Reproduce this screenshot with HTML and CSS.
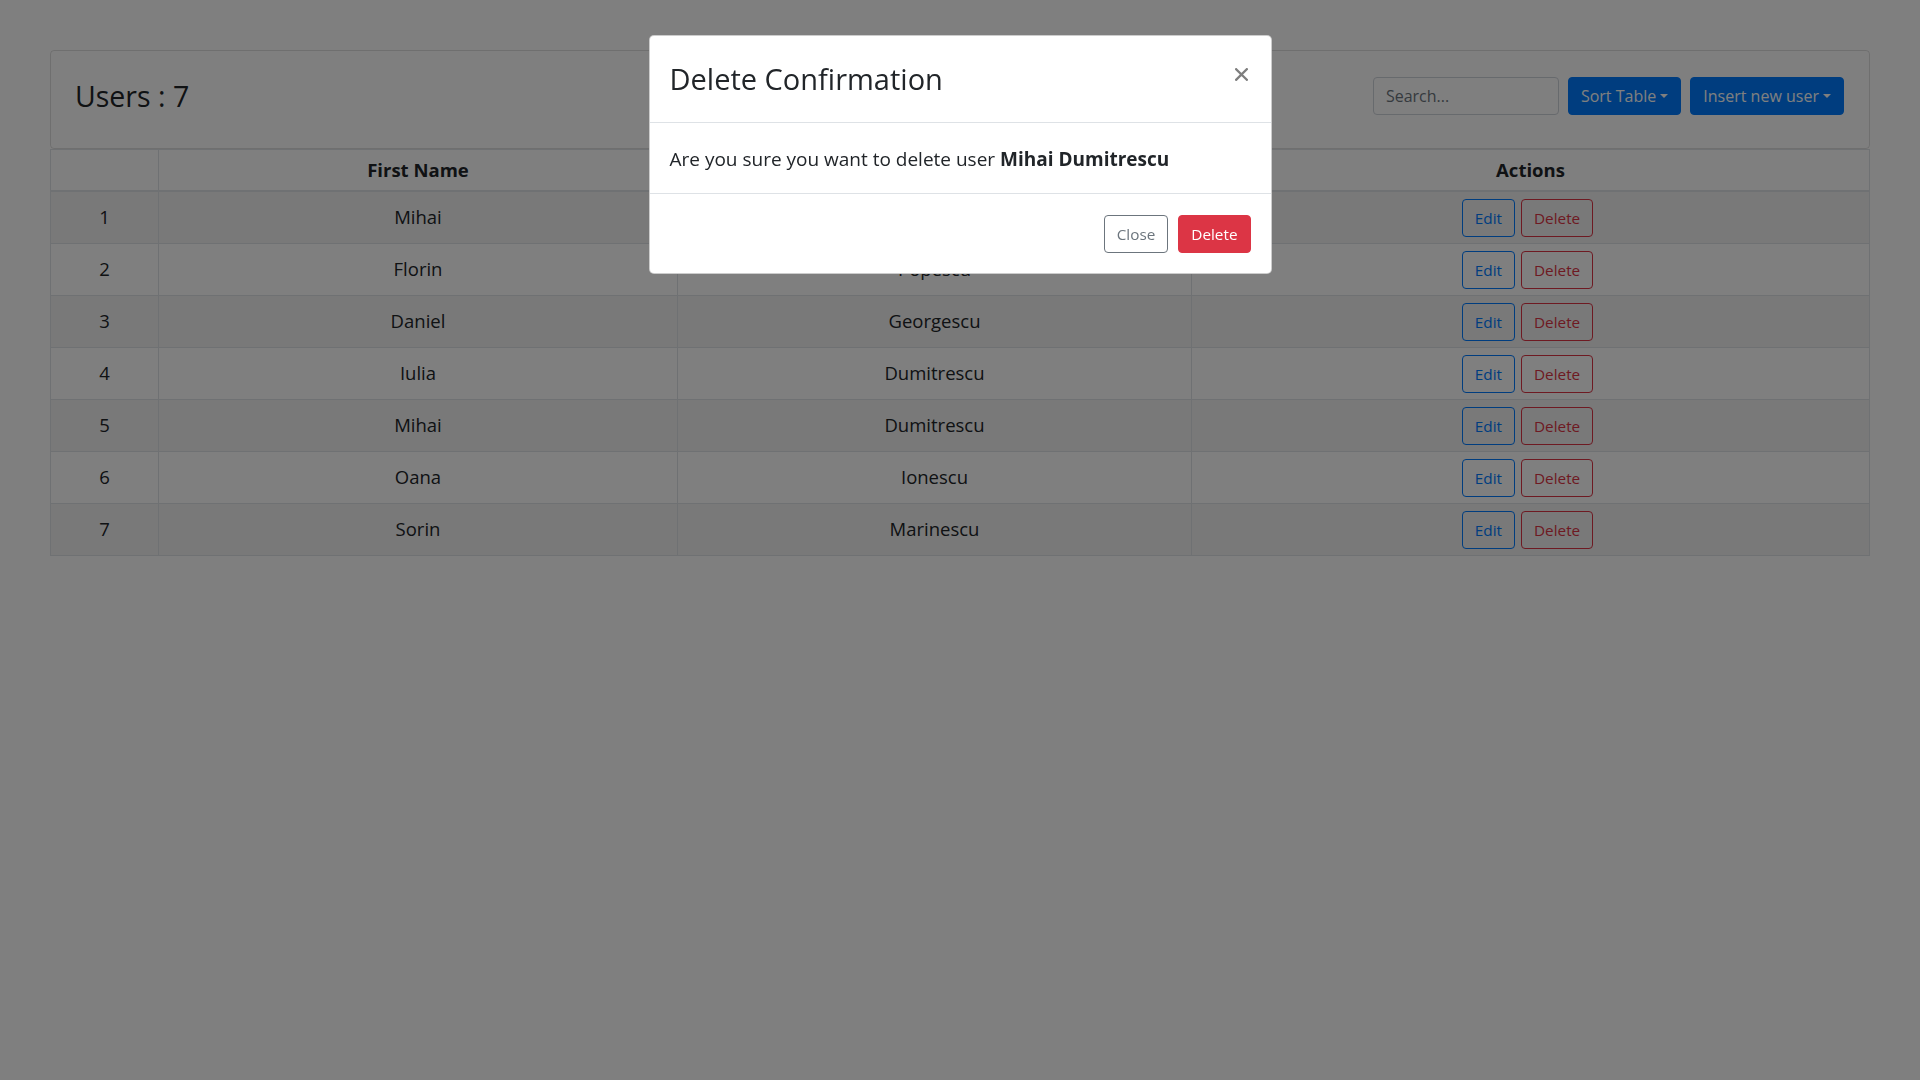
FILE: index.html
```html
<!DOCTYPE html>
<html lang="en">
<head>
<meta charset="utf-8">
<title>Users</title>
<link rel="stylesheet" href="styles.css">
</head>
<body>
<div class="page">
  <div class="card">
    <h2 class="card-title">Users : 7</h2>
    <div class="tools">
      <input class="search" type="text" placeholder="Search...">
      <button class="btn btn-primary dropdown">Sort Table</button>
      <button class="btn btn-primary dropdown">Insert new user</button>
    </div>
  </div>
  <table class="users">
    <colgroup>
      <col class="c-num"><col class="c-first"><col class="c-last"><col>
    </colgroup>
    <thead>
      <tr><th></th><th>First Name</th><th>Last Name</th><th>Actions</th></tr>
    </thead>
    <tbody>
      <tr><td>1</td><td>Mihai</td><td>Popa</td><td class="actions"><div class="act"><button class="btn btn-sm-text btn-outline-primary">Edit</button><button class="btn btn-sm-text btn-outline-danger">Delete</button></div></td></tr>
      <tr><td>2</td><td>Florin</td><td>Popescu</td><td class="actions"><div class="act"><button class="btn btn-sm-text btn-outline-primary">Edit</button><button class="btn btn-sm-text btn-outline-danger">Delete</button></div></td></tr>
      <tr><td>3</td><td>Daniel</td><td>Georgescu</td><td class="actions"><div class="act"><button class="btn btn-sm-text btn-outline-primary">Edit</button><button class="btn btn-sm-text btn-outline-danger">Delete</button></div></td></tr>
      <tr><td>4</td><td>Iulia</td><td>Dumitrescu</td><td class="actions"><div class="act"><button class="btn btn-sm-text btn-outline-primary">Edit</button><button class="btn btn-sm-text btn-outline-danger">Delete</button></div></td></tr>
      <tr><td>5</td><td>Mihai</td><td>Dumitrescu</td><td class="actions"><div class="act"><button class="btn btn-sm-text btn-outline-primary">Edit</button><button class="btn btn-sm-text btn-outline-danger">Delete</button></div></td></tr>
      <tr><td>6</td><td>Oana</td><td>Ionescu</td><td class="actions"><div class="act"><button class="btn btn-sm-text btn-outline-primary">Edit</button><button class="btn btn-sm-text btn-outline-danger">Delete</button></div></td></tr>
      <tr><td>7</td><td>Sorin</td><td>Marinescu</td><td class="actions"><div class="act"><button class="btn btn-sm-text btn-outline-primary">Edit</button><button class="btn btn-sm-text btn-outline-danger">Delete</button></div></td></tr>
    </tbody>
  </table>
</div>

<div class="backdrop"></div>
<div class="modal">
  <div class="modal-content">
    <div class="modal-header">
      <h4 class="modal-title">Delete Confirmation</h4>
      <button class="close" aria-label="Close">
        <svg width="13" height="13" viewBox="0 0 13 13"><path d="M1.2 1.2 L11.8 11.8 M11.8 1.2 L1.2 11.8" stroke="#000" stroke-width="2.3" stroke-linecap="square" fill="none"/></svg>
      </button>
    </div>
    <div class="modal-body">Are you sure you want to delete user <b>Mihai Dumitrescu</b></div>
    <div class="modal-footer">
      <button class="btn btn-sm-text btn-outline-secondary">Close</button>
      <button class="btn btn-sm-text btn-danger">Delete</button>
    </div>
  </div>
</div>
</body>
</html>
```
FILE: styles.css
```css
html, body {
  margin: 0;
  padding: 0;
}
body {
  font-family: "Open Sans", "Noto Sans", sans-serif;
  font-size: 18.5px;
  color: #212529;
  background: #fff;
}
.page {
  padding: 50px;
}
.card {
  display: flex;
  align-items: center;
  justify-content: space-between;
  border: 1px solid rgba(0, 0, 0, .125);
  border-radius: 4px;
  padding: 26px 25px 33px 24px;
}
.card-title {
  margin: 0;
  font-size: 28.5px;
  line-height: 38px;
  font-weight: 400;
}
.tools {
  display: flex;
  gap: 9px;
}
.search {
  box-sizing: border-box;
  width: 186px;
  height: 38px;
  border: 1px solid #ced4da;
  border-radius: 4px;
  padding: 6px 12px;
  font-family: inherit;
  font-size: 16px;
  color: #495057;
  background: #fff;
}
.search::placeholder {
  color: #6c757d;
}
.btn {
  font-family: inherit;
  font-size: 16px;
  line-height: 24px;
  padding: 6px 12px;
  border: 1px solid transparent;
  border-radius: 4px;
  background: transparent;
  cursor: pointer;
}
.btn-sm-text {
  font-size: 15.3px;
}
.btn-primary {
  background: #007bff;
  border-color: #007bff;
  color: #fff;
}
.btn-outline-primary {
  color: #007bff;
  border-color: #007bff;
}
.btn-outline-danger {
  color: #dc3545;
  border-color: #dc3545;
}
.btn-outline-secondary {
  color: #6c757d;
  border-color: #6c757d;
}
.btn-danger {
  background: #dc3545;
  border-color: #dc3545;
  color: #fff;
}
.dropdown::after {
  content: "";
  display: inline-block;
  margin-left: .255em;
  vertical-align: .255em;
  border-top: .3em solid;
  border-right: .3em solid transparent;
  border-left: .3em solid transparent;
  border-bottom: 0;
}

.users {
  width: 100%;
  border-collapse: collapse;
}
.c-num { width: 108px; }
.c-first { width: 519px; }
.c-last { width: 514px; }
.users th,
.users td {
  border: 1px solid #dee2e6;
  text-align: center;
  line-height: 27px;
}
.users th {
  padding: 6px 12px 7px;
  font-weight: 700;
  border-bottom-width: 2px;
}
.users td {
  padding: 11px 12px 13px;
  vertical-align: top;
}
.users td.actions {
  padding: 6px 12px;
  vertical-align: middle;
}
.users tbody tr:nth-child(odd) {
  background: rgba(0, 0, 0, .05);
}
.act {
  display: flex;
  justify-content: center;
  gap: 6px;
  padding-right: 6px;
}

.backdrop {
  position: fixed;
  inset: 0;
  background: rgba(0, 0, 0, .5);
}
.modal {
  position: fixed;
  inset: 0;
  display: flex;
  justify-content: center;
  align-items: flex-start;
}
.modal-content {
  margin-top: 35px;
  width: 623px;
  box-sizing: border-box;
  background: #fff;
  border: 1px solid rgba(0, 0, 0, .2);
  border-radius: 5px;
}
.modal-header {
  display: flex;
  justify-content: space-between;
  align-items: flex-start;
  padding: 23px 20px 23px;
  border-bottom: 1px solid #dee2e6;
}
.modal-title {
  margin: 0;
  font-size: 29px;
  line-height: 40px;
  font-weight: 400;
}
.close {
  margin: 9px 3px 0 0;
  padding: 0;
  border: 0;
  background: transparent;
  width: 13px;
  height: 13px;
  opacity: .5;
  line-height: 0;
}
.modal-body {
  padding: 23px 20px 20px;
  font-size: 19px;
  line-height: 27px;
}
.modal-footer {
  display: flex;
  justify-content: flex-end;
  gap: 10px;
  padding: 21px 20px 20px;
  border-top: 1px solid #dee2e6;
}
```
